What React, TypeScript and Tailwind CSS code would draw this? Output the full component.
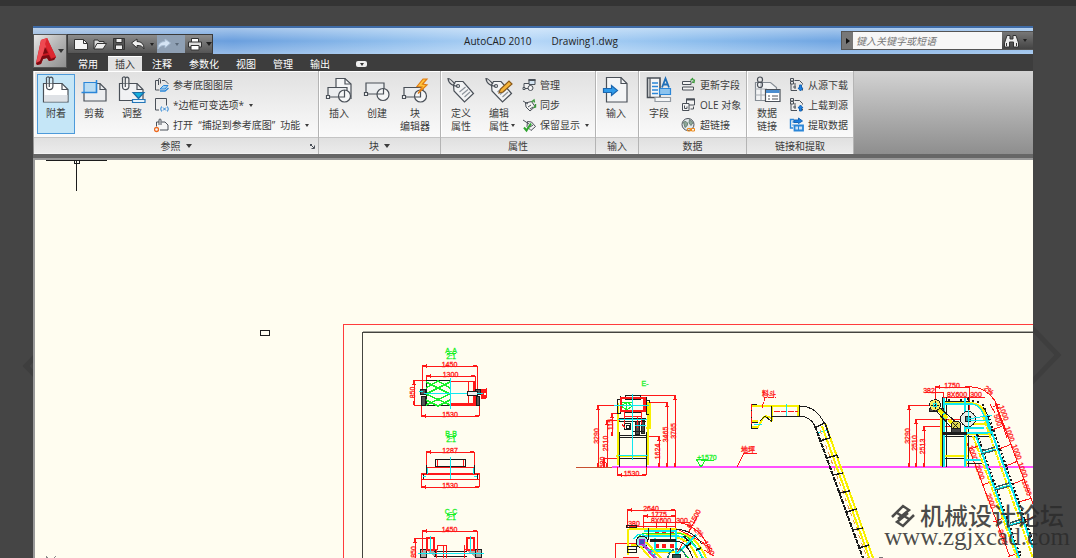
import React from 'react';

const INK = '#4a5058';
const BLUE = '#2a86d8';

type IconProps = { children: React.ReactNode };

const BigIcon = ({ children }: IconProps) => (
  <svg width="28" height="28" viewBox="0 0 28 28" fill="none" stroke={INK} strokeWidth="1.2" aria-hidden="true">
    {children}
  </svg>
);

const SmallIcon = ({ children }: IconProps) => (
  <svg width="16" height="16" viewBox="0 0 16 16" fill="none" stroke={INK} strokeWidth="1" className="shrink-0" aria-hidden="true">
    {children}
  </svg>
);

const Caret = ({ className = '' }: { className?: string }) => (
  <svg width="6" height="4" viewBox="0 0 6 4" className={className} aria-hidden="true">
    <path d="M0 0h6L3 4z" fill="currentColor" />
  </svg>
);

const TinyCaret = () => (
  <svg width="4" height="3" viewBox="0 0 4 3" className="shrink-0" aria-hidden="true">
    <path d="M0 0h4L2 3z" fill="currentColor" />
  </svg>
);

/* ---------- large icons ---------- */

const Clip = () => (
  <>
    <path d="M4.500 3h6.500v10h-6.500z" fill="#ffffff55" stroke="none" />
    <path d="M4.500 3v7.500a3.200 3.200 0 0 0 6.400 0V3a1.800 1.800 0 0 0-3.600 0v8" />
    <path d="M4.500 3a1.500 1.500 0 0 1 3-1" />
  </>
);

const AttachIcon = () => (
  <BigIcon>
    <path d="M1.500 7.500H20l6 6v12.500H1.500z" fill="#fff" />
    <path d="M20 7.500v6h6" />
    <path d="M2 19h23.500v6.500H2z" fill="#dfe2e6" stroke="none" />
    <Clip />
  </BigIcon>
);

const ClipIcon = () => (
  <BigIcon>
    <path d="M6 7.500H20l6 6v11.500H4V16" fill="#eceef0" />
    <path d="M20 7.500v6h6" />
    <path d="M4 6.500h12.500v10H4z" fill="#b9dcf3" stroke={BLUE} />
    <path d="M1.500 16.500h15V4" stroke={BLUE} strokeWidth="1.500" />
  </BigIcon>
);

const AdjustIcon = () => (
  <BigIcon>
    <path d="M1.500 7.500H19l6 6v11H1.500z" fill="#f0f1f3" />
    <path d="M19 7.500v6h6" />
    <Clip />
    <path d="M15 16.500h11l-5.500 6z" fill="#16b0dc" stroke="#1b6da6" />
    <path d="M14.500 23.500h12.500v3h-12.500z" fill="#e5f2fb" stroke="#2476b8" />
  </BigIcon>
);

const BlockShape = () => (
  <>
    <path d="M3 11.500h19v9.500H3z" fill="#ebedef" />
    <circle cx="19.500" cy="20" r="6" fill="#f5f6f7" />
    <path d="M14 21h5.500v-7" />
    <path d="M1.500 19.500h3v3h-3z" fill="#fff" />
  </>
);

const InsertBlockIcon = () => (
  <BigIcon>
    <path d="M11 11V2.500h9l6 5.500v15" fill="#f4f5f6" />
    <path d="M20 2.500V8h6" />
    <BlockShape />
  </BigIcon>
);

const CreateBlockIcon = () => (
  <BigIcon>
    <path d="M3 7h18v11H3z" fill="#ebedef" />
    <circle cx="20" cy="18.500" r="6" fill="#f5f6f7" />
    <path d="M14 18h6.500v-5.500" />
    <path d="M1.500 16.500h3v3h-3z" fill="#fff" />
  </BigIcon>
);

const BlockEditorIcon = () => (
  <BigIcon>
    <BlockShape />
    <path d="M22 3l-6 7.500 5 .5-4 6.500 9-8.500-4.500-.8L26 3z" fill="#ffc43a" stroke="#e07b12" />
  </BigIcon>
);

const TagShape = () => (
  <>
    <path d="M6.500 9l2-3.500L16 5.500l10.500 12-9 8.500L7 15z" fill="#f3f4f5" />
    <circle cx="11" cy="10" r="1.500" fill="#fff" />
    <path d="M12.500 16l6-5M15 18.500l6-5M17.500 21l5.500-5" stroke="#8d949c" />
    <path d="M10.500 10C7 10.500 1.500 8 1 2.500c2 0 4 2 7 5.500" />
  </>
);

const DefineAttrIcon = () => (
  <BigIcon>
    <TagShape />
  </BigIcon>
);

const EditAttrIcon = () => (
  <BigIcon>
    <TagShape />
    <path d="M14 17l1.500-4L24 5l3 3-9 8z" fill="#f6b53a" stroke="#8b5a1a" />
  </BigIcon>
);

const ImportIcon = () => (
  <BigIcon>
    <path d="M4.500 1.500H19l6 6v18.500H4.500z" fill="#f4f5f6" />
    <path d="M19 1.500v6h6" />
    <path d="M1.500 12.500h8V9.500l6 5-6 5v-3h-8z" fill="#2f9bea" stroke="#1c67b0" />
  </BigIcon>
);

const FieldIcon = () => (
  <BigIcon>
    <path d="M2.500 2h12.500v19.500H2.500z" fill="#f4f5f6" strokeWidth="1.600" />
    <path d="M5 2v19" />
    <path d="M7 7h6M7 10.500h6M7 14h6M7 17.500h6" stroke={BLUE} strokeWidth="1.600" />
    <path d="M14.500 12.500h11v6h-11z" fill="#8cc3ee" stroke={BLUE} />
    <path d="M10 21.500h15.500v4H10z" fill="#f4f5f6" stroke="#9299a1" />
    <path d="M17 11.500l3.500-9 3.500 9M18.500 8.500h4.500" stroke="#1f6fb8" strokeWidth="1.800" />
  </BigIcon>
);

const DataLinkIcon = () => (
  <BigIcon>
    <path d="M2.500 6.500h15l6 5v13h-21z" fill="#f2f3f4" stroke="#858c94" />
    <path d="M2.500 13H14M2.500 19H14M8 7v17" stroke="#a9afb5" />
    <path d="M12.500 13.500h14.500v12h-14.500z" fill="#fff" />
    <path d="M13 14h13.500v3H13z" fill="#4b8ed0" stroke="none" />
    <path d="M15 20h2M15 23h2M19 20h6M19 23h6" />
    <rect x="4.500" y="1" width="5" height="5.500" rx="2.500" />
    <rect x="4.500" y="6" width="5" height="5.500" rx="2.500" />
  </BigIcon>
);

/* ---------- small icons ---------- */

const UnderlayIcon = () => (
  <SmallIcon>
    <path d="M4 3.500H1.500V13h4M8 3.500h3l3 3V7" />
    <path d="M4.500 8V2.500a1 1 0 0 1 2 0v4" />
    <path d="M6 12l3.500-3.500h4.500L11 12z" fill="#9fd0f3" stroke={BLUE} />
    <path d="M6 14h5L14.500 11" stroke={BLUE} strokeWidth="1.500" />
  </SmallIcon>
);

const FrameIcon = () => (
  <SmallIcon>
    <path d="M5 13H1.500V1.500h11v7" />
    <path d="M7.500 9.500q-1.500 2.500 0 5M13.500 9.500q1.500 2.500 0 5M9 10.500l3 3M12 10.500l-3 3" stroke={BLUE} />
  </SmallIcon>
);

const SnapIcon = () => (
  <SmallIcon>
    <path d="M2.500 9.500V5h2.500M7.500 5h3.500l3 3v5H6" />
    <path d="M5 8V3a1 1 0 0 1 2 0v5" />
    <circle cx="2.500" cy="12.500" r="2" stroke="#ee6a20" strokeWidth="1.300" />
  </SmallIcon>
);

const ManageIcon = () => (
  <SmallIcon>
    <path d="M3 6.500h6v5H3z" fill="#eee" />
    <circle cx="9.500" cy="11" r="2.500" fill="#f6f6f6" />
    <path d="M8 2.500h6v5H8z" fill="#d4e4f2" />
    <path d="M7.500 3h7" strokeWidth="2" />
    <path d="M2 10.500h2v2H2z" fill="#fff" />
  </SmallIcon>
);

const SyncIcon = () => (
  <SmallIcon>
    <path d="M4.500 6l6-1.500 3.500 5-5 4.500L5 10z" fill="#f4f4f4" />
    <path d="M7 7L2 4M7 10l3-2M9 12l3-2" />
    <path d="M10.500 5l2.500-2 .5 2.500M14.500 7v3l-2 .5" stroke="#3c9a3c" strokeWidth="1.400" />
  </SmallIcon>
);

const RetainIcon = () => (
  <SmallIcon>
    <path d="M6.500 4.500l4 .5 4 4.500-4.500 4-4-4z" fill="#f4f4f4" />
    <path d="M2 3l6 4M9 10l3-2" />
    <path d="M3 10.500l2.500 3L10 6.500" stroke="#2fa52f" strokeWidth="2" />
  </SmallIcon>
);

const UpdateFieldIcon = () => (
  <SmallIcon>
    <path d="M1.500 4.500h8.500v3H1.500zM1.500 10h11v3h-11z" fill="#f3f3f3" />
    <path d="M9.500 3.500l2-2 1 2M13.500 2.500l-.5 3-2-.5" stroke="#3c9a3c" strokeWidth="1.300" />
  </SmallIcon>
);

const OleIcon = () => (
  <SmallIcon>
    <path d="M5.500 2h8v6h-8z" fill="#f3f3f3" />
    <path d="M5 2.500h9" strokeWidth="2" />
    <path d="M1.500 6.500H8V13.500H1.500z" fill="#f3f3f3" />
    <path d="M3.500 8.500v3h2.500v-2M9.500 12h3V9.500" />
  </SmallIcon>
);

const HyperlinkIcon = () => (
  <SmallIcon>
    <circle cx="7" cy="7.500" r="6" fill="#e3e8ec" />
    <path d="M2.500 5q3-1.500 4 1t-2.500 4.500zM8.500 2.500l3.500 3-2 3-2-2.500z" fill="#8fa79a" stroke="#6b8377" />
    <path d="M6.500 11.500h3v2.500h-3zM10.500 11.500h3v2.500h-3z" stroke="#ec8a1c" />
  </SmallIcon>
);

const SheetWithArrow = ({ arrow }: { arrow: string }) => (
  <SmallIcon>
    <path d="M5.500 3.500h5l3 3v1M2 7v6.500H8M13.500 12v1.500M4 10h3M6 6v6" />
    <path d="M1.500 1.500h3v2.500h-3zM1.500 4.500h3v2.500h-3z" />
    <path d={arrow} fill="#1c7fe0" stroke="#1664b4" />
  </SmallIcon>
);

const ExtractIcon = () => (
  <SmallIcon>
    <path d="M5 2.500H1.500V11H4M3.500 5h2M3.500 8h1" stroke={BLUE} strokeWidth="1.400" />
    <path d="M5 5.500V3h4.500V1L13.500 4l-4 2.500V5.500z" fill="#1c7fe0" stroke="#1664b4" />
    <path d="M5.500 8.500h8.500v5h-8.500z" fill="#cfe5f8" stroke={BLUE} strokeWidth="1.800" />
    <path d="M9.500 9v5" stroke={BLUE} />
  </SmallIcon>
);

/* ---------- ribbon parts ---------- */

type BigButtonProps = {
  icon: React.ReactNode;
  lines: string[];
  active?: boolean;
  dropdown?: boolean;
};

const BigButton = ({ icon, lines, active, dropdown }: BigButtonProps) => (
  <button
    className={`flex h-[60px] w-[38px] shrink-0 flex-col items-center border pt-px text-[10px] leading-[13px] whitespace-nowrap ${
      active ? 'border-[#4d9ada] bg-[#c5e6f7]' : 'border-transparent'
    }`}
  >
    {icon}
    <span className="flex flex-col pt-[3px]">
      {lines.map((line, i) => (
        <span key={line} className="relative">
          {line}
          {dropdown && i === lines.length - 1 && (
            <span className="absolute top-1 -right-[6px]">
              <TinyCaret />
            </span>
          )}
        </span>
      ))}
    </span>
  </button>
);

type SmallButtonProps = { icon: React.ReactNode; label: string; dropdown?: boolean };

const SmallButton = ({ icon, label, dropdown }: SmallButtonProps) => (
  <button className="flex h-5 items-center gap-[3px] text-[10px] leading-[14px] whitespace-nowrap">
    {icon}
    <span className="whitespace-pre">{label}</span>
    {dropdown && <span className="pl-[2px]"><TinyCaret /></span>}
  </button>
);

const Rows = ({ children }: { children: React.ReactNode }) => (
  <div className="flex flex-col pt-px pl-[3px]">{children}</div>
);

type PanelProps = {
  title: string;
  width: string;
  expandable?: boolean;
  launcher?: boolean;
  children: React.ReactNode;
};

const Panel = ({ title, width, expandable, launcher, children }: PanelProps) => (
  <section className={`flex shrink-0 flex-col border-r border-[#b4b4b4] ${width}`}>
    <div className="flex h-[66px] items-start border-t border-l border-white bg-linear-to-b from-[#e1e1e1] to-[#fafafa] pt-[2px]">
      {children}
    </div>
    <footer className="relative flex h-[17px] items-center justify-center gap-[5px] border-t border-b border-t-[#c4c4c4] border-b-[#f2f2f2] bg-linear-to-b from-[#e0e0e0] to-[#ebebeb] text-[10px] leading-[14px]">
      <span>{title}</span>
      {expandable && <Caret />}
      {launcher && (
        <svg width="5" height="5" viewBox="0 0 5 5" className="absolute top-[6px] right-[3px]" stroke={INK} fill="none" aria-hidden="true">
          <path d="M0 .5h2M.5 0v2M1 1l3 3M4.500 1.500v3h-3" />
        </svg>
      )}
    </footer>
  </section>
);

const Ribbon = () => (
  <div className="flex h-[83px] overflow-hidden bg-linear-to-b from-[#d3d3d3] to-[#8e8e8e] pl-px text-[#3c3c3c]">
    <Panel title="参照" width="w-[285px]" expandable launcher>
      <div className="flex pl-[2px]">
        <BigButton icon={<AttachIcon />} lines={['附着']} active />
        <BigButton icon={<ClipIcon />} lines={['剪裁']} />
        <BigButton icon={<AdjustIcon />} lines={['调整']} />
      </div>
      <Rows>
        <SmallButton icon={<UnderlayIcon />} label="参考底图图层" />
        <SmallButton icon={<FrameIcon />} label="*边框可变选项*" dropdown />
        <SmallButton icon={<SnapIcon />} label={'打开  “捕捉到参考底图”  功能'} dropdown />
      </Rows>
    </Panel>
    <Panel title="块" width="w-[122px]" expandable>
      <BigButton icon={<InsertBlockIcon />} lines={['插入']} />
      <BigButton icon={<CreateBlockIcon />} lines={['创建']} />
      <BigButton icon={<BlockEditorIcon />} lines={['块', '编辑器']} />
    </Panel>
    <Panel title="属性" width="w-[155px]">
      <BigButton icon={<DefineAttrIcon />} lines={['定义', '属性']} />
      <BigButton icon={<EditAttrIcon />} lines={['编辑', '属性']} dropdown />
      <Rows>
        <SmallButton icon={<ManageIcon />} label="管理" />
        <SmallButton icon={<SyncIcon />} label="同步" />
        <SmallButton icon={<RetainIcon />} label="保留显示" dropdown />
      </Rows>
    </Panel>
    <Panel title="输入" width="w-[43px]">
      <BigButton icon={<ImportIcon />} lines={['输入']} />
    </Panel>
    <Panel title="数据" width="w-[108px]">
      <BigButton icon={<FieldIcon />} lines={['字段']} />
      <Rows>
        <SmallButton icon={<UpdateFieldIcon />} label="更新字段" />
        <SmallButton icon={<OleIcon />} label="OLE 对象" />
        <SmallButton icon={<HyperlinkIcon />} label="超链接" />
      </Rows>
    </Panel>
    <Panel title="链接和提取" width="w-[107px]">
      <BigButton icon={<DataLinkIcon />} lines={['数据', '链接']} />
      <Rows>
        <SmallButton icon={<SheetWithArrow arrow="M10.500 8h2v3h1.500l-2.500 3L9 11h1.500z" />} label="从源下载" />
        <SmallButton icon={<SheetWithArrow arrow="M10.500 14h2v-3h1.500l-2.500-3L9 11h1.500z" />} label="上载到源" />
        <SmallButton icon={<ExtractIcon />} label="提取数据" />
      </Rows>
    </Panel>
  </div>
);

/* ---------- title bar and tabs ---------- */

const AppButton = () => (
  <button
    aria-label="AutoCAD"
    className="absolute top-2 left-0 z-10 flex h-[34px] w-[34px] items-center gap-px border border-[#555] bg-linear-to-br from-[#e8e8e8] via-[#b5b5b5] to-[#8f8f8f] pl-[2px] text-[#333]"
  >
    <svg width="21" height="28" viewBox="0 0 21 28" aria-hidden="true">
      <path d="M5 3l6-2 9 19-2 3-5 1-2-3-4 1-2 5-4 1-1-2z" fill="#c81822" />
      <path d="M5 3l6-2 2 4-6 12-3 8-4 2z" fill="#ee4a52" />
      <path d="M11 1l9 19-5 1-6-14z" fill="#dc2730" />
      <path d="M9 10l3 6-5 1z" fill="#7d0c13" />
      <path d="M0 26l4-2 2-5 7-1 2 4 5-2-2 3-5 1-2-3-4 1-2 5-4 1z" fill="#7c0b12" />
    </svg>
    <Caret />
  </button>
);

const QuickButton = ({ label, light, children }: { label: string; light?: boolean; children: React.ReactNode }) => (
  <button aria-label={label} className={`flex h-[18px] items-center justify-center ${light ? 'bg-[#8fa0b4]' : ''}`}>
    <svg width="14" height="14" viewBox="0 0 14 14" fill="none" stroke="#333" aria-hidden="true">
      {children}
    </svg>
  </button>
);

const QuickAccess = () => (
  <div className="mt-2 ml-[34px] flex h-5 w-[146px] shrink-0 items-center gap-[5px] border border-[#3a3a3a] bg-linear-to-b from-[#8c8c8c] to-[#555] pl-[6px] text-[#222]">
    <QuickButton label="新建">
      <path d="M.5 2.500h9l4 4v6H.5z" fill="#f4f4f4" />
      <path d="M9.500 2.500v4h4" />
    </QuickButton>
    <QuickButton label="打开">
      <path d="M1 12V3h4l1 1.500h5V7" fill="#ddd" />
      <path d="M1 12l3-5.500h9.500L10 12z" fill="#eee" />
    </QuickButton>
    <QuickButton label="保存">
      <path d="M1.500 1.500h11v11h-11z" fill="#555" />
      <path d="M4 1.500h6v4H4zM3.500 8h7v4.500h-7z" fill="#eee" />
    </QuickButton>
    <QuickButton label="放弃">
      <path d="M.5 6L6 2v2.500q7 0 7 7.500-2-4-7-3.500V11z" fill="#f0f0f0" />
    </QuickButton>
    <div className="flex items-center gap-[3px]">
      <TinyCaret />
      <div className="flex items-center gap-[4px] bg-[#8fa0b4] pr-[6px]">
        <QuickButton label="重做" light>
          <path d="M13.500 6L8 2v2.500q-7 0-7 7.500 2-4 7-3.500V11z" fill="#d5e4f4" stroke="#a9bdd2" />
        </QuickButton>
        <span className="text-[#5c6a7a]"><TinyCaret /></span>
      </div>
      <QuickButton label="打印">
        <path d="M3.500 5V1.500h7V5" fill="#fff" />
        <path d="M.5 5h13v5H.5z" fill="#ddd" />
        <path d="M3 8.500h8v4.500H3z" fill="#fff" />
      </QuickButton>
      <span className="ml-px"><Caret /></span>
    </div>
  </div>
);

const SearchBox = () => (
  <div className="mt-[5px] flex h-[19px] w-[192px] shrink-0 items-center overflow-hidden border border-r-0 border-[#555] bg-linear-to-b from-[#777] to-[#444]">
    <button aria-label="展开" className="flex h-full w-[11px] items-center justify-center bg-[#777]">
      <svg width="4" height="6" viewBox="0 0 4 6" aria-hidden="true">
        <path d="M0 0l4 3-4 3z" fill="#111" />
      </svg>
    </button>
    <input
      aria-label="键入关键字或短语"
      placeholder="键入关键字或短语"
      className="h-full w-[149px] bg-[#f7f7f7] px-[3px] text-[10px] italic placeholder:text-[#777]"
    />
    <button aria-label="搜索" className="flex h-full flex-1 items-center gap-1 pl-[2px] text-[#222]">
      <svg width="15" height="14" viewBox="0 0 15 14" fill="#ececec" stroke="#333" className="shrink-0" aria-hidden="true">
        <path d="M3 1.500h3V5H9V1.500h3L14.500 9v4h-5V8h-4v5h-5V9z" />
        <path d="M2.500 9v3M12.500 9v3" />
      </svg>
      <TinyCaret />
    </button>
  </div>
);

const TitleBar = () => (
  <header className="relative flex h-7 items-start justify-between border-t-2 border-[#3f6ca8] bg-[linear-gradient(90deg,#8fb2dc_0%,#6a9fde_20%,#8dbcec_35%,#b4d6f7_50%,#8fbfee_65%,#6fa5e2_80%,#86b5e8_100%)]">
    <div className="absolute inset-0 bg-linear-to-b from-white/40 via-transparent to-white/30" />
    <div className="relative -mt-[2px] flex w-full items-start justify-between">
      <AppButton />
      <QuickAccess />
      <h1 className="mt-2 ml-7 flex gap-5 text-[10px] leading-[14px] whitespace-nowrap text-[#222]">
        <span>AutoCAD 2010</span>
        <span>Drawing1.dwg</span>
      </h1>
      <SearchBox />
    </div>
  </header>
);

const TABS = ['常用', '插入', '注释', '参数化', '视图', '管理', '输出'];

const TabBar = () => (
  <nav className="flex h-[17px] items-end gap-[3px] bg-[#3d3d3d] pl-[38px] text-[10px] leading-[14px] text-white">
    {TABS.map((tab) => (
      <button
        key={tab}
        className={`h-[15px] px-[7px] ${tab === '插入' ? 'border-t border-white bg-[#e2e2e2] text-[#333]' : ''}`}
      >
        {tab}
      </button>
    ))}
    <button aria-label="最小化功能区" className="mb-1 ml-4 flex h-[6px] w-[11px] items-center justify-center rounded-xs bg-[#eee] text-[#333]">
      <TinyCaret />
    </button>
  </nav>
);

/* ---------- drawing ---------- */

const RED = '#ff1818';
const CYAN = '#10e8f0';
const YELLOW = '#f8f000';
const GREEN = '#18f028';
const BLACK = '#1c1c1c';

type LabelProps = { x: number; y: number; rotate?: number; color?: string; children: React.ReactNode };

const Label = ({ x, y, rotate = 0, color = RED, children }: LabelProps) => (
  <text
    x={x}
    y={y}
    transform={`rotate(${rotate} ${x} ${y})`}
    textAnchor="middle"
    dominantBaseline="central"
    fontSize="7"
    fill={color}
    stroke={color}
    strokeWidth="0.3"
  >
    {children}
  </text>
);

// horizontal dimension with arrow heads and extension lines down (or up) to `ext`
const DimH = ({ x1, x2, y, ext, text }: { x1: number; x2: number; y: number; ext: number; text: string }) => (
  <g>
    <path d={`M${x1} ${y}H${x2}M${x1} ${y}V${ext}M${x2} ${y}V${ext}`} />
    <path d={`M${x1} ${y}l4-1v2zM${x2} ${y}l-4-1v2z`} fill={RED} />
    <Label x={(x1 + x2) / 2} y={y - 2}>{text}</Label>
  </g>
);

const DimV = ({ x, y1, y2, ext, text }: { x: number; y1: number; y2: number; ext: number; text: string }) => (
  <g>
    <path d={`M${x} ${y1}V${y2}M${x} ${y1}H${ext}`} />
    <path d={`M${x} ${y1}l-1 4h2zM${x} ${y2}l-1-4h2z`} fill={RED} />
    <Label x={x - 2} y={(y1 + y2) / 2} rotate={-90}>{text}</Label>
  </g>
);

const Section = ({ y, name }: { y: number; name: string }) => (
  <g>
    <Label x={451} y={y} color={GREEN}>{name}</Label>
    <path d={`M447 ${y + 3}h9`} stroke={GREEN} />
    <Label x={451} y={y + 6} color={GREEN}>2:1</Label>
  </g>
);

const SectionViews = () => (
  <g>
    <Section y={350} name="A-A" />
    <g stroke={RED}>
      <DimH x1={422} x2={477} y={366} ext={390} text="1450" />
      <DimH x1={426} x2={475} y={376} ext={381} text="1300" />
      <DimH x1={421} x2={479} y={416} ext={402} text="1530" />
      <DimV x={414} y1={380} y2={405} ext={426} text="850" />
      <path d="M414 405h12M450 381h25v24h-25zM468 381v24" />
      <path d="M450 404h25M474 381v24" strokeWidth="2" />
      <path d="M481 389h4v3h-2v3h2v3h-4M486 388v10" fill={RED} />
    </g>
    <path d="M450 380h-24v25h24" stroke={BLACK} />
    <path d="M426 382l24 12-24 11M450 382l-24 12 24 11M426 388l12-7 12 7M426 400l12 6 12-6" stroke={GREEN} strokeWidth="1.500" />
    <g stroke={BLACK}>
      <path d="M420 389h5v5h-5zM421 396h4v9h-4zM475 389h5v5h-5zM476 396h3v9h-3z" fill="#555" />
      <path d="M467 391h10v4h-10z" fill="#eee" />
    </g>
    <path d="M450 378v31M424 393h43M477 393h6M419 391h4" stroke={CYAN} />

    <Section y={433} name="B-B" />
    <g stroke={RED}>
      <DimH x1={426} x2={474} y={452} ext={466} text="1287" />
      <path d="M426 467h48M437 459v7M463 459v7M430 479h41" />
      <path d="M421 473h58v6h-58zM421 474h58" />
      <DimH x1={421} x2={479} y={487} ext={478} text="1530" />
    </g>
    <path d="M435 466v-7h30v7zM426 465v9M474 465v9M423 474v5M477 474v5" stroke={BLACK} />
    <path d="M450 457v22M427 468v6M473 468v6M423 476h3M474 476h3" stroke={CYAN} />

    <Section y={511} name="C-C" />
    <path d="M434 551h33M434 556h33M420 549h6v8h-6zM475 549h6v8h-6zM426 550h9v7M466 550h9v7" stroke={BLACK} fill="#66666688" />
    <g stroke={RED}>
      <DimH x1={422} x2={477} y={531} ext={552} text="1450" />
      <path d="M427 538h7v12h-7zM467 538h7v12h-7z" strokeWidth="1.500" />
      <path d="M434 549h3v-4h9v13M443 545v13M467 549h-3v-4M436 550v8M464 550v8" />
      <DimV x={415} y1={538} y2={566} ext={427} text="850" />
    </g>
    <path d="M418 553h66M430 536v16M470 536v16" stroke={CYAN} />
  </g>
);

const FrontView = () => (
  <g>
    <Label x={645} y={383} color={GREEN}>E-</Label>
    <g stroke={RED}>
      <DimV x={598} y1={405} y2={467} ext={618} text="3290" />
      <DimV x={607} y1={420} y2={467} ext={620} text="2510" />
      <DimV x={612} y1={413} y2={436} ext={620} text="115" />
      <DimV x={604} y1={458} y2={467} ext={619} text="500" />
      <DimV x={659} y1={436} y2={467} ext={647} text="1624" />
      <DimV x={667} y1={402} y2={467} ext={648} text="3465" />
      <DimV x={675} y1={395} y2={467} ext={640} text="3765" />
      <DimH x1={617} x2={646} y={475} ext={467} text="1530" />
    </g>
    <path d="M618 403v62M648 402v63M616 456h32" stroke={YELLOW} strokeWidth="2" />
    <path d="M621 402h11v8h-11zM621 406l6-4 5 4-5 4zM626 402v8" stroke={GREEN} />
    <g stroke={BLACK}>
      <path d="M625 395h15v4h-15zM620 396v18M646 397v18M619 432v35M646 432v35M619 435h27M619 437h27M619 458h27" />
      <path d="M624 423h6v6h-6zM626 425h3v3h-3zM617 399h3v14h-3zM646 400h3v14h-3zM650 403v19" />
      <path d="M635 421h4v13h-4zM641 420h3v13h-3zM632 431h12" fill="#4a4a4a" />
      <path d="M619 418h27M619 421h27M625 412h16" />
    </g>
    <g stroke={RED}>
      <path d="M621 398h24v13h-24z" strokeWidth="2" />
      <path d="M643 399v13M624 412v12M641 412v12M624 416h17M622 424l3 4M637 428v-12" />
    </g>
    <path d="M632 394v66M614 405h36M618 419h29M618 455h30M635 425h11" stroke={CYAN} />
    <path d="M650 403v26M646 428h5" stroke={YELLOW} strokeWidth="2" />

    <path d="M701 467l-5-8h10zM701 460h13" stroke={GREEN} />
    <Label x={707} y={457} color={GREEN}>±1570</Label>
    <path d="M737 467l7-14h13" stroke={RED} />
    <Label x={748} y={449}>地坪</Label>
  </g>
);

const Chute = () => (
  <g>
    <path d="M752 406h46M772 407v14M752 421h6M798 405v12M772 421h-2" stroke={YELLOW} strokeWidth="2" />
    <path d="M752 427h6l5-9 3-2 5 2" stroke={YELLOW} strokeWidth="2" />
    <path d="M752 404h5M751 404v24h7M751 422h7M760 421l5-5 6 5v-15M772 416h27M799 405v11M799 406c11 0 20 6 25 17M799 416c8 0 13 4 16 10" stroke={BLACK} />
    <path d="M774 411h24M762 408l3-11h11M751 404v20" stroke={RED} strokeDasharray="6 1" />
    <path d="M786 404v12M817 433l12-3M754 424h8" stroke={CYAN} />
    <Label x={769} y={393}>料斗</Label>
    <path d="M815 426l48 132" stroke={BLACK} strokeWidth="2" strokeDasharray="5 1" />
    <path d="M825 423l48 135M822 426l48 134" stroke={YELLOW} strokeWidth="2" />
    <path d="M820 430l48 130" stroke="#e8a04a" strokeDasharray="4 4" />
    <path
      d="M816 427l9-4M819 441l11-3M827 458l10-3M833 475l10-2M839 493l11-2M846 512l11-3M853 530l10-2M859 548l10-3M825 423l5 15M837 455l1 3"
      stroke={BLACK}
      strokeWidth="1.500"
    />
    <circle cx="881" cy="560" r="3" fill="#777" />
  </g>
);

const ElevatorView = () => (
  <g>
    <g stroke={RED}>
      <DimV x={909} y1={405} y2={467} ext={930} text="3290" />
      <DimV x={916} y1={419} y2={467} ext={962} text="2510" />
      <DimV x={924} y1={426} y2={467} ext={950} text="2513" />
      <DimH x1={935} x2={969} y={387} ext={410} text="1750" />
      <path d="M925 392h18v10M943 397h42M969 387c14-1 25 9 30 22" />
      <path d="M990 404l5 9M995 403l12 35M993 407l7-3M997 407l36 97M967 443l43 114" />
      <path d="M992 430l13-5M999 449l13-5M1006 466l12-5M1013 484l12-5M1019 502l13-4M1026 520l8-3" />
      <path d="M970 449l11-4M982 485l12-4M993 522l14-5M1008 557l12-5" />
      <Label x={929} y={390}>382</Label>
      <Label x={957} y={394}>8X600</Label>
      <Label x={976} y={394}>300</Label>
      <Label x={989} y={390} rotate={40}>2%</Label>
      <Label x={1004} y={413} rotate={70}>1000</Label>
      <Label x={998} y={420} rotate={70}>500</Label>
      <Label x={1010} y={434} rotate={70}>1000</Label>
      <Label x={1017} y={452} rotate={70}>1000</Label>
      <Label x={1023} y={470} rotate={70}>1000</Label>
      <Label x={1027} y={488} rotate={70}>1000</Label>
      <Label x={973} y={453} rotate={70}>1000</Label>
      <Label x={980} y={472} rotate={70}>2000</Label>
      <Label x={991} y={501} rotate={70}>2000</Label>
      <Label x={1003} y={537} rotate={70}>2000</Label>
    </g>

    <path d="M942 397v70M946 397v70M968 397v70M943 401h27M943 436h48M945 455h21M945 458h21M966 463h16M983 407c5 5 6 15 9 29" stroke={BLACK} />
    <path d="M944 403h26c10 0 14 6 17 16l5 15M944 434h46M944 456h24M966 420v46M966 424h20M941 408v58" stroke={YELLOW} strokeWidth="2" />
    <path d="M944 398v69M965 398v69M944 404h26c9 0 12 6 15 14l6 18M945 433h44M966 460h16M966 428h18" stroke={CYAN} strokeWidth="1.500" />

    <path d="M988 415l46 130M977 434l44 124" stroke={BLACK} strokeWidth="2" strokeDasharray="2 2" />
    <path d="M986 416l47 132M976 436l44 124" stroke={CYAN} strokeWidth="2" />
    <path d="M983 416l50 142M973 436l45 124" stroke={YELLOW} strokeWidth="2" strokeDasharray="5 1" />
    <path d="M981 454l15-4M995 490l15-4M1009 526l14-4M982 451l13-4M996 487l13-4M1010 523l12-4" stroke="#3b5c5c" strokeWidth="1.500" />
    <path d="M981 453l15-4M995 489l15-4M1009 525l14-4" stroke={CYAN} />

    <path d="M929 408h14v3h-14z" stroke={BLACK} fill="#555" />
    <circle cx="935" cy="405" r="5.500" stroke={BLACK} fill="#f6e860" strokeDasharray="3 1" />
    <path d="M931 405h8M935 401v8" stroke={BLACK} />
    <circle cx="935" cy="405" r="2" stroke={CYAN} />
    <path d="M936 411l16 17M940 408l17 15" stroke={BLACK} />
    <path d="M939 410l16 16" stroke={YELLOW} strokeWidth="3" strokeDasharray="5 2" />
    <circle cx="956" cy="426" r="5" stroke={BLACK} fill="#e0d850" />
    <path d="M953 423l5 5M958 423l-5 5" stroke={BLACK} />
    <path d="M951 428h9v5h-9z" fill="#444" stroke={BLACK} />
    <path d="M942 433h25" stroke={BLACK} strokeWidth="3" />
    <circle cx="968" cy="419" r="7.500" stroke={BLACK} fill="#e8efe8" />
    <circle cx="968" cy="419" r="3" stroke={BLACK} fill="#38888c" />
    <path d="M968 419l24-4M968 421l22-1M968 410v18" stroke={CYAN} />
    <g fill={BLACK}>
      {[[949, 400], [961, 400], [968, 399], [973, 401], [978, 402], [983, 405], [985, 409], [992, 430], [999, 449], [1006, 466], [1013, 484], [1019, 502], [1025, 520], [981, 445], [993, 481], [1007, 517], [1020, 552]].map(([cx, cy]) => (
        <circle key={`${cx}-${cy}`} cx={cx} cy={cy} r="1.500" stroke="none" />
      ))}
    </g>
  </g>
);

const HeadDetail = () => (
  <g>
    <g stroke={RED}>
      <DimH x1={627} x2={675} y={510} ext={528} text="2640" />
      <DimH x1={643} x2={675} y={516} ext={528} text="1775" />
      <path d="M629 526h21M643 522h47M643 526h32M656 522v8M666 522v8M615 543h26M615 543v15M623 557h16M675 528l29 15" />
      <path d="M676 555l21-38M676 522c17 2 29 13 34 30M702 543l10 6M704 550l10 6" />
      <path d="M655 530h3v3h-3zM662 530h3v3h-3zM670 530h3v3h-3zM655 544h3v3h-3zM662 544h3v3h-3zM670 544h3v3h-3z" fill={RED} />
      <Label x={634} y={523}>380</Label>
      <Label x={661} y={520}>8X600</Label>
      <Label x={682} y={520}>300</Label>
      <Label x={694} y={519} rotate={-62}>R1500</Label>
      <Label x={709} y={548} rotate={60}>1000</Label>
      <Label x={699} y={532} rotate={45}>2%</Label>
    </g>
    <path d="M629 529h47v6h-30M628 529v26M631 545h16M650 552h27" stroke={YELLOW} strokeWidth="2" />
    <path d="M676 533c14 0 24 10 31 27M676 538c10 0 17 9 22 22" stroke={YELLOW} strokeWidth="2" />
    <path d="M636 543c0-6 5-10 12-10h30c10 1 18 12 24 25M646 549h25M680 548l10 12" stroke={GREEN} />
    <path d="M634 539c3-6 7-5 12-3h32c12 2 20 12 26 24M648 551h24M644 531h32M655 538v17M676 530v25M676 555l20-20" stroke={CYAN} strokeWidth="1.500" />
    <path d="M626 527h10v-2h-10zM627 546h9v6h-9zM627 549h9M676 529c12 1 20 6 26 15M676 541c8 1 14 8 17 18M648 528v12M670 528v12" stroke={BLACK} />
    <path d="M650 540h26" stroke={BLACK} strokeWidth="3" />
    <path d="M684 536l4 5M691 543l-5 4M696 550l5-2" stroke={BLACK} strokeWidth="2" />
    <circle cx="642" cy="542" r="6" stroke={BLACK} fill="#9be8ea" />
    <circle cx="642" cy="542" r="3" stroke="#b020c0" fill="#3850c0" />
    <path d="M640 546l12 14M646 542l15 16" stroke={YELLOW} strokeWidth="2" />
    <path d="M643 544l14 16" stroke="#c030c8" strokeWidth="3" />
    <path d="M644 545l13 14" stroke={CYAN} strokeDasharray="3 2" />
    <circle cx="677" cy="558" r="9" stroke="#1d7078" strokeWidth="1.500" strokeDasharray="3 1" />
    <path d="M672 554h8v5h-8z" fill="#255" stroke={BLACK} />
  </g>
);

const Drawing = () => (
  <svg
    width="998"
    height="398"
    viewBox="35 160 998 398"
    fill="none"
    shapeRendering="crispEdges"
    className="block shrink-0 font-['Liberation_Sans_Narrow','Liberation_Sans','Noto_Sans_CJK_SC',sans-serif]"
    role="img"
    aria-label="Drawing1.dwg"
  >
    <path d="M46 160h61M76 160v31" stroke={BLACK} />
    <path d="M74 160h5v3h-5z" stroke={BLACK} />
    <path d="M260 330h9v5h-9z" stroke={BLACK} />
    <path d="M46 556l3 4M56 556l-3 4" stroke="#888" />
    <path d="M343 560V324h692" stroke="#ff3c3c" />
    <path d="M363 331h672" stroke="#a8a8a0" />
    <path d="M362 560V332h673" stroke="#44443f" />
    <path d="M576 467h42" stroke="#c85030" />
    <path d="M612 467h423" stroke="#ff50ff" strokeWidth="2" />
    <SectionViews />
    <FrontView />
    <Chute />
    <ElevatorView />
    <HeadDetail />
  </svg>
);

const Watermark = () => (
  <div className="absolute right-[6px] bottom-3 flex flex-col items-center text-[#2c2c2c]/85">
    <div className="flex items-center gap-1">
      <svg width="26" height="24" viewBox="0 0 26 24" fill="none" stroke="currentColor" strokeWidth="2.500" aria-hidden="true">
        <path d="M2 13L13 2l6 4L8 15M7 9l5 3M24 11L13 22l-6-4L18 9M19 15l-5-3" />
      </svg>
      <span className="text-[24px] leading-[24px] font-medium">机械设计论坛</span>
    </div>
    <span className="font-['Liberation_Serif',serif] text-[25px] leading-[18px]">www.zgjxcad.com</span>
  </div>
);

export default function App() {
  return (
    <div className="relative flex min-h-screen flex-col overflow-hidden border-t-[6px] border-[#343434] bg-[#454545] font-['Open_Sans','Noto_Sans_CJK_SC',sans-serif]">
      <button aria-label="上一张" className="absolute top-[324px] left-[22px]">
        <svg width="36" height="72" viewBox="0 0 36 72" fill="none" stroke="#3e3e3e" strokeWidth="5" aria-hidden="true">
          <path d="M33 6L4 36l29 30" />
        </svg>
      </button>
      <button aria-label="下一张" className="absolute top-[313px] right-[14px]">
        <svg width="36" height="72" viewBox="0 0 36 72" fill="none" stroke="#3e3e3e" strokeWidth="5" aria-hidden="true">
          <path d="M3 6l29 30L3 66" />
        </svg>
      </button>

      <main className="relative mt-5 mr-[43px] ml-[33px] flex flex-1 flex-col">
        <TitleBar />
        <TabBar />
        <Ribbon />
        <div className="h-1 bg-[#666]" />
        <div className="flex flex-1 overflow-hidden border-t-2 border-l-2 border-[#999] bg-[#fffdf0]">
          <Drawing />
        </div>
      </main>

      <Watermark />
    </div>
  );
}
